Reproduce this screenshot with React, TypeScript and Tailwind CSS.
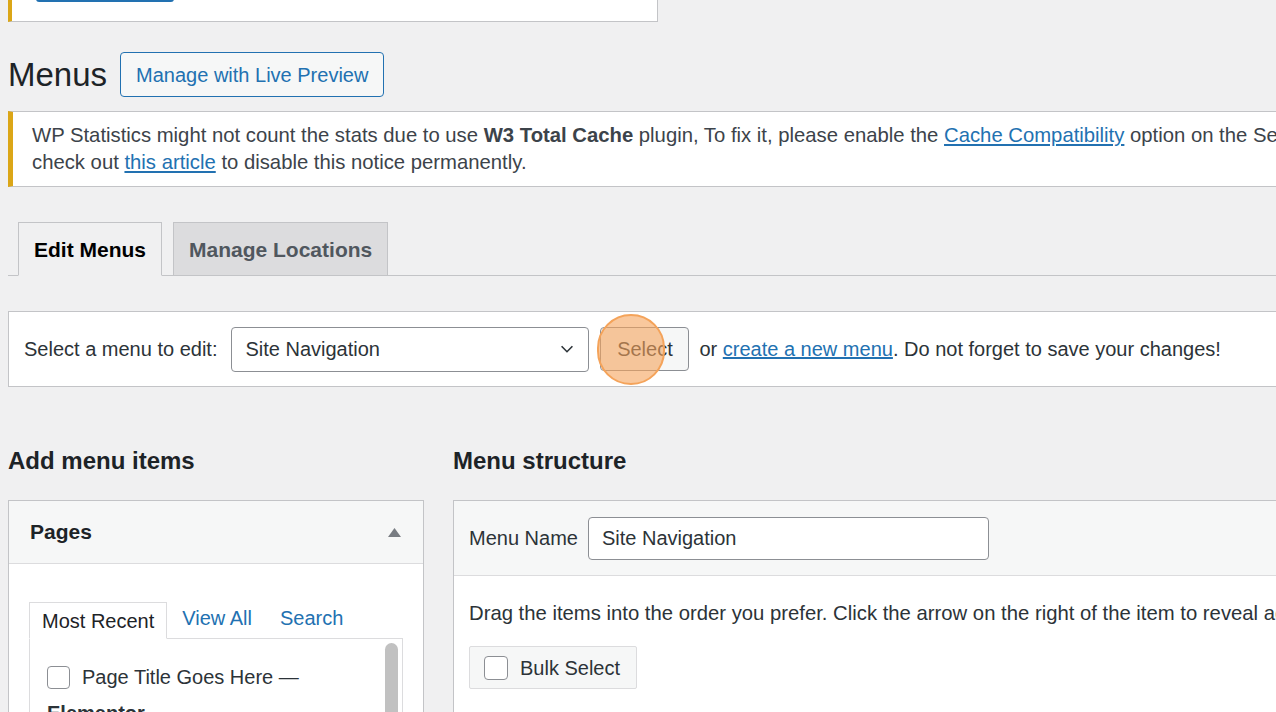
export default function App() {
  return (
    <div
      className="relative h-[712px] w-[1276px] overflow-hidden bg-[#f0f0f1] pl-2 text-[20px] text-[#1d2327]"
      style={{ fontFamily: '"Liberation Sans", Arial, sans-serif' }}
    >
      {/* cut-off notice at top */}
      <div className="flex h-[22px] w-[650px] items-end overflow-hidden border-b border-r border-[#c3c4c7] border-l-4 border-l-[#dba617] bg-white">
        <div className="mb-[19px] flex items-end gap-[14px] pl-6">
          <div className="h-[30px] w-[138px] rounded-[3px] bg-[#2271b1]" />
          <span className="mb-[1px] text-[#3c434a]">and we think you will really enjoy it</span>
        </div>
      </div>

      {/* title */}
      <div className="mt-[30px] flex items-center gap-[13px]">
        <h1 className="text-[33px] leading-none text-[#1d2327]">Menus</h1>
        <button className="h-[45px] rounded-[4px] border border-[#2271b1] bg-[#f6f7f7] px-[15px] text-[20px] text-[#2271b1]">
          Manage with Live Preview
        </button>
      </div>

      {/* warning notice */}
      <div className="mt-[14px] w-[1500px] border border-[#c3c4c7] border-l-[5px] border-l-[#dba617] bg-white pb-[10px] pt-[10px] pl-[19px] text-[20.3px] leading-[27px] text-[#3c434a]">
        <p className="whitespace-nowrap">
          WP Statistics might not count the stats due to use <b>W3 Total Cache</b> plugin, To fix it, please enable the{' '}
          <a className="text-[#2271b1] underline">Cache Compatibility</a> option on the Settings page,
        </p>
        <p className="whitespace-nowrap">
          check out <a className="text-[#2271b1] underline">this article</a> to disable this notice permanently.
        </p>
      </div>

      {/* tabs */}
      <div className="mt-[36px] flex h-[53px] items-end gap-[11px] border-b border-[#c3c4c7] pl-[10px]">
        <div className="mb-[-1px] flex h-[54px] items-center border border-[#c3c4c7] border-b-[#f0f0f1] bg-[#f0f0f1] px-[15px] pt-[2px] text-[21px] font-bold text-[#000]">
          Edit Menus
        </div>
        <div className="flex h-[53px] items-center border border-b-0 border-[#c3c4c7] bg-[#dcdcde] px-[15px] pt-[2px] text-[21px] font-bold text-[#50575e]">
          Manage Locations
        </div>
      </div>

      {/* select menu */}
      <div className="mt-[35px] flex h-[76px] w-[1400px] items-center border border-[#c3c4c7] bg-white pl-[15px]">
        <span className="text-[#2c3338]">Select a menu to edit:</span>
        <div className="ml-[14px] flex h-[45px] w-[358px] items-center justify-between rounded-[4px] border border-[#8c8f94] bg-white pl-[13px] pr-[12px] text-[#2c3338]">
          <span>Site Navigation</span>
          <svg width="18" height="18" viewBox="0 0 20 20" fill="none" stroke="#2c3338" strokeWidth="1.8">
            <path d="M4 7l6 6 6-6" />
          </svg>
        </div>
        <div className="relative ml-[11px]">
          <button className="h-[44px] w-[89px] rounded-[4px] border border-[#8c8f94] bg-[#f6f7f7] text-[#2c3338]">
            Select
          </button>
          <div className="absolute left-[-3px] top-[-13px] h-[71px] w-[68px] rounded-full border-2 border-[#f4a35a] bg-[#f5a45b]/60" />
        </div>
        <span className="ml-[10px] text-[#2c3338]">
          or <a className="text-[#2271b1] underline">create a new menu</a>. Do not forget to save your changes!
        </span>
      </div>

      {/* columns */}
      <div className="mt-[59px] flex gap-[29px]">
        <div className="w-[416px] shrink-0">
          <h2 className="text-[24px] font-bold leading-[30px] text-[#1d2327]">Add menu items</h2>
          <div className="mt-[24px] h-[300px] border border-[#c3c4c7] bg-white">
            <div className="flex h-[63px] items-center justify-between border-b border-[#dcdcde] bg-[#f6f7f7] pl-[21px] pr-[22px]">
              <h3 className="text-[21px] font-bold text-[#1d2327]">Pages</h3>
              <svg width="13" height="9" viewBox="0 0 13 9">
                <path d="M0 9 L6.5 0 L13 9 Z" fill="#787c82" />
              </svg>
            </div>
            <div className="px-[20px] pt-[38px]">
              <div className="flex items-end">
                <div className="mb-[-1px] flex h-[37px] items-center border border-b-white border-[#dcdcde] bg-white px-[12px] text-[#1d2327]">
                  Most Recent
                </div>
                <span className="ml-[15px] pb-[5px] text-[#2271b1]">View All</span>
                <span className="ml-[28px] pb-[5px] text-[#2271b1]">Search</span>
              </div>
              <div className="flex h-[120px] w-[374px] justify-between border border-[#dcdcde] bg-white pl-[17px] pr-[4px]">
                <div className="pt-[23px]">
                  <div className="flex items-center gap-[12px]">
                    <div className="h-[23px] w-[23px] rounded-[4px] border border-[#8c8f94] bg-white" />
                    <span className="text-[#2c3338]">Page Title Goes Here —</span>
                  </div>
                  <div className="mt-[6px] font-bold text-[#2c3338]">Elementor</div>
                </div>
                <div className="mt-[4px] h-[100px] w-[13px] rounded-full bg-[#c1c1c1]" />
              </div>
            </div>
          </div>
        </div>

        <div className="w-[900px] shrink-0">
          <h2 className="text-[24px] font-bold leading-[30px] text-[#1d2327]">Menu structure</h2>
          <div className="mt-[24px] h-[300px] border border-[#c3c4c7] bg-white">
            <div className="flex h-[75px] items-center border-b border-[#dcdcde] bg-[#f6f7f7] pl-[15px]">
              <span className="text-[#2c3338]">Menu Name</span>
              <div className="ml-[10px] flex h-[43px] w-[401px] items-center rounded-[4px] border border-[#8c8f94] bg-white pl-[13px] text-[#2c3338]">
                Site Navigation
              </div>
            </div>
            <div className="pl-[15px] pt-[22px]">
              <p className="whitespace-nowrap text-[20.3px] text-[#2c3338]">
                Drag the items into the order you prefer. Click the arrow on the right of the item to reveal additional configuration options.
              </p>
              <div className="mt-[18px] flex h-[43px] w-[168px] items-center gap-[12px] rounded-[2px] border border-[#dcdcde] bg-[#f6f7f7] pl-[14px]">
                <div className="h-[24px] w-[24px] rounded-[4px] border border-[#8c8f94] bg-white" />
                <span className="text-[#2c3338]">Bulk Select</span>
              </div>
            </div>
          </div>
        </div>
      </div>
    </div>
  );
}
